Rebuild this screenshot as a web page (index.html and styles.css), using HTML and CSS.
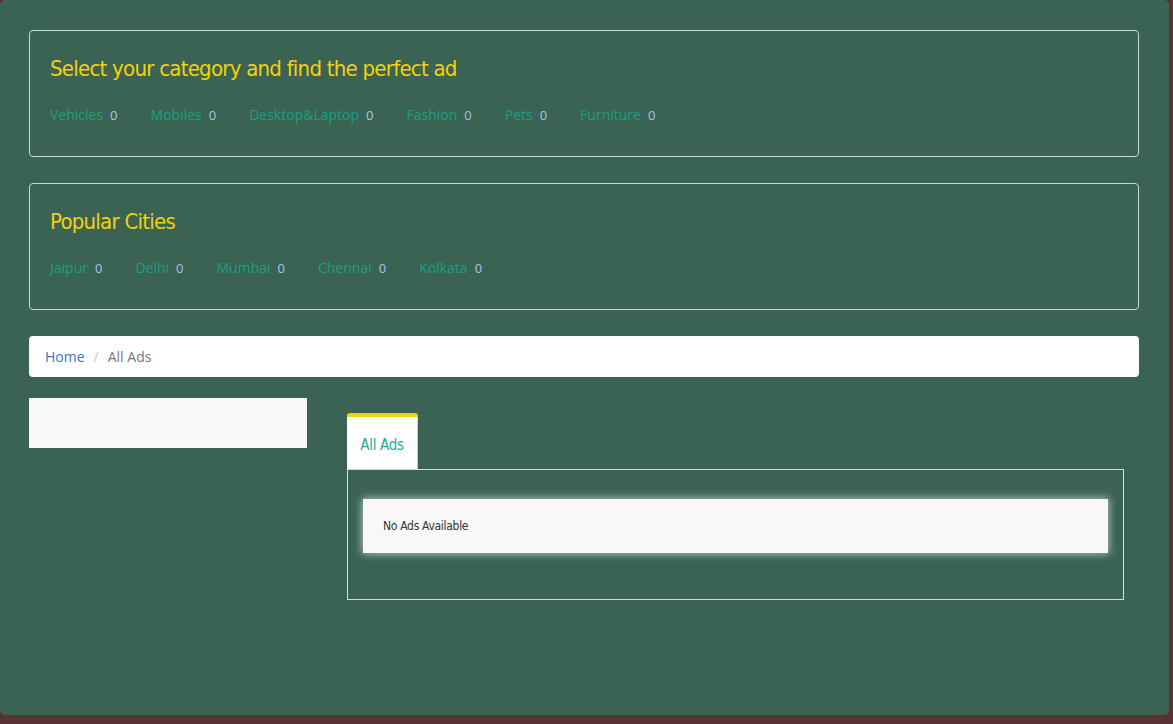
FILE: index.html
```html
<!DOCTYPE html>
<html>
<head>
<meta charset="utf-8">
<link rel="stylesheet" href="styles.css">
</head>
<body>
<div class="page">
  <div class="container">
    <section class="panel">
      <h3 class="panel-title">Select your category and find the perfect ad</h3>
      <ul class="tags">
        <li><a href="#">Vehicles</a><span class="count">0</span></li>
        <li><a href="#">Mobiles</a><span class="count">0</span></li>
        <li><a href="#">Desktop&amp;Laptop</a><span class="count">0</span></li>
        <li><a href="#">Fashion</a><span class="count">0</span></li>
        <li><a href="#">Pets</a><span class="count">0</span></li>
        <li><a href="#">Furniture</a><span class="count">0</span></li>
      </ul>
    </section>
    <section class="panel">
      <h3 class="panel-title">Popular Cities</h3>
      <ul class="tags">
        <li><a href="#">Jaipur</a><span class="count">0</span></li>
        <li><a href="#">Delhi</a><span class="count">0</span></li>
        <li><a href="#">Mumbai</a><span class="count">0</span></li>
        <li><a href="#">Chennai</a><span class="count">0</span></li>
        <li><a href="#">Kolkata</a><span class="count">0</span></li>
      </ul>
    </section>
    <ol class="breadcrumb">
      <li><a href="#">Home</a></li>
      <li class="sep">/</li>
      <li class="active">All Ads</li>
    </ol>
    <div class="main">
      <aside class="sidebar"></aside>
      <div class="content">
        <ul class="tabs">
          <li class="tab active">All Ads</li>
        </ul>
        <div class="tab-pane">
          <div class="notice">No Ads Available</div>
        </div>
      </div>
    </div>
  </div>
</div>
</body>
</html>
```

FILE: styles.css
```css
html, body {
  margin: 0;
  padding: 0;
}
body {
  background: #5c3134;
  font-family: "Open Sans", "Noto Sans", sans-serif;
  font-size: 14px;
  line-height: 20px;
  width: 1173px;
  height: 724px;
  overflow: hidden;
}
.page {
  width: 1169px;
  height: 715px;
  background: #3b6354;
  border-radius: 5px;
  box-sizing: border-box;
  padding-top: 30px;
}
.container {
  margin: 0 30px 0 29px;
}
.panel {
  border: 1px solid #c6d6e2;
  border-radius: 4px;
  height: 127px;
  box-sizing: border-box;
  padding: 0 20px;
  margin-bottom: 26px;
}
.panel-title {
  margin: 21px 0 0;
  font-family: "DejaVu Sans Condensed", "DejaVu Sans", sans-serif;
  font-stretch: condensed;
  font-weight: normal;
  font-size: 22px;
  letter-spacing: -0.75px;
  line-height: 34px;
  color: #f2d10a;
}
.tags {
  list-style: none;
  margin: 19px 0 0;
  padding: 0;
  display: flex;
}
.tags li {
  margin-right: 33px;
  display: flex;
  gap: 7px;
}
.tags a {
  color: #17a07f;
  text-decoration: none;
}
.count {
  color: #a3c6e6;
  font-size: 13px;
}
.breadcrumb {
  list-style: none;
  margin: 0 0 21px;
  padding: 0 16px;
  height: 41px;
  background: #fff;
  border-radius: 4px;
  display: flex;
  align-items: center;
  gap: 9px;
}
.breadcrumb a {
  color: #3d74c0;
  text-decoration: none;
}
.breadcrumb .sep {
  color: #ccc;
}
.breadcrumb .active {
  color: #777;
}
.main {
  display: grid;
  grid-template-columns: 278px 1fr;
  align-items: start;
}
.sidebar {
  height: 50px;
  background: #f8f8f8;
}
.content {
  padding: 15px 15px 0 40px;
}
.tabs {
  list-style: none;
  margin: 0;
  padding: 0;
  display: flex;
}
.tab {
  width: 71px;
  height: 56px;
  box-sizing: border-box;
  background: #fff;
  border-top: 4px solid #f2d10a;
  border-right: 1px solid #c9c9c9;
  border-radius: 3px 3px 0 0;
  color: #17ae93;
  font-family: "DejaVu Sans Condensed", "DejaVu Sans", sans-serif;
  font-stretch: condensed;
  font-size: 15px;
  letter-spacing: -0.3px;
  display: flex;
  align-items: center;
  justify-content: center;
  padding-top: 3px;
}
.tab-pane {
  border: 1px solid #d4dcd8;
  height: 131px;
  box-sizing: border-box;
  padding: 29px 15px 0;
}
.notice {
  height: 54px;
  background: #f8f8f8;
  box-shadow: 0 0 8px 1px rgba(255, 255, 255, 0.6);
  display: flex;
  align-items: center;
  padding-left: 20px;
  font-family: "DejaVu Sans Condensed", "DejaVu Sans", sans-serif;
  font-stretch: condensed;
  font-size: 12px;
  letter-spacing: -0.3px;
  color: #333;
}
```
